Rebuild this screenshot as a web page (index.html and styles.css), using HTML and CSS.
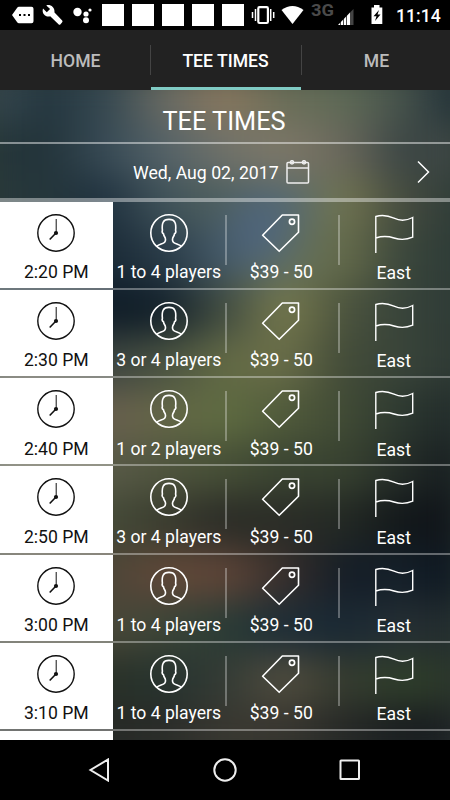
FILE: index.html
```html
<!DOCTYPE html>
<html lang="en">
<head>
    <meta charset="UTF-8">
    <meta name="viewport" content="width=device-width, initial-scale=1.0">
    <title>Tee Times</title>
    <link rel="stylesheet" href="styles.css">
</head>
<body>
    <!-- shared icons -->
    <svg class="sprite" aria-hidden="true">
        <symbol id="clock" viewBox="0 0 40 40">
            <circle cx="20" cy="20" r="18.2" stroke-width="1.4"/>
            <path d="M20.2 6v14" stroke-width="1"/>
            <path d="M19.5 20.5l-5.8 6" stroke-width="1.6"/>
            <circle cx="20" cy="20" r="2.1" fill="currentColor" stroke="none"/>
        </symbol>
        <symbol id="player" viewBox="0 0 40 40">
            <circle cx="20" cy="20" r="18.2"/>
            <path d="M7.6 33.3C10 31.5 13 31 14.8 29.9C16.8 28.7 16.7 26.5 16.2 24.8C15.5 23.5 14.7 22.5 14.5 20.8C13.3 20 12.9 18.5 13.4 17.2C12.7 10.5 13.8 6.4 20 6.4S27.3 10.5 26.6 17.2C27.1 18.5 26.7 20 25.5 20.8C25.3 22.5 24.5 23.5 23.8 24.8C23.3 26.5 23.2 28.7 25.2 29.9C27 31 30 31.5 32.4 33.3"/>
        </symbol>
        <symbol id="tag" viewBox="0 0 40 40">
            <path d="M21.3 2h16.2v17.3L18.2 38.3L1.6 22.2z" stroke-linejoin="round"/>
            <circle cx="31" cy="8.8" r="2.6" stroke-width="1.7"/>
        </symbol>
        <symbol id="flag" viewBox="0 0 40 40">
            <path d="M1.8 40V3.5C8 1.5 13 2 20 5.2C26 8 32 8 38.7 4.5V24.2C32 27 26 27 20 25C13 22.8 8 23 1.8 25" stroke-width="1.4"/>
        </symbol>
    </svg>

    <div class="statusbar">
        <svg width="100" height="30" viewBox="0 0 100 30" fill="#fff">
            <path d="M12 15l5-7q.8-1.2 2-1.2h12.5q2 0 2 2v12.5q0 2-2 2H19q-1.2 0-2-1.2z"/>
            <path d="M19 14h2v2h-2zM23.5 14h2v2h-2zM28 14h2v2h-2z" fill="#000"/>
            <path d="M43 8.5l3.8 3.7 3.3-3.3-3.8-3.5c3.8-1.2 8.7 1.5 8.2 7.2l7.7 8q.8 1-.2 2l-1.5 1.7q-1 1-2 0l-8.3-8c-4 1.2-8.9-2.2-7.2-7.8z"/>
            <circle cx="77.5" cy="12" r="4.2"/>
            <circle cx="86" cy="14" r="2.6"/>
            <circle cx="90" cy="10" r="1.6"/>
            <circle cx="86" cy="20.3" r="3"/>
        </svg>
        <div class="notices"><i></i><i></i><i></i><i></i><i></i></div>
        <svg class="signals" width="142" height="30" viewBox="250 0 142 30" fill="#fff">
            <rect x="258.3" y="7.2" width="9.6" height="15.8" rx="1.2" fill="none" stroke="#fff" stroke-width="2.2"/>
            <path d="M255.5 9v12M252.5 12v6M270.7 9v12M273.7 12v6" stroke="#fff" stroke-width="1.5"/>
            <path d="M281.5 10q11-8 22 0L292.5 24z"/>
            <text x="311" y="15.5" class="network" textLength="23" lengthAdjust="spacingAndGlyphs">3G</text>
            <path d="M338 25L350 12.5V25z"/>
            <path d="M350 12.5L353.5 9V25H350z" fill="#444"/>
            <path d="M340.5 20v5M343.5 17v8M346.5 14v11" stroke="#000" stroke-width=".7"/>
            <path d="M371.5 7.5h2.5V5h5.5v2.5h2.8V24h-10.8z"/>
            <path d="M379 10l-5.5 6.3h3L375 21l5.5-6.4h-3z" fill="#000"/>
        </svg>
        <span class="time">11:14</span>
    </div>

    <nav class="tabs">
        <a class="tab">HOME</a>
        <a class="tab active">TEE TIMES</a>
        <a class="tab">ME</a>
    </nav>

    <main class="content">
        <h1>TEE TIMES</h1>
        <div class="date">
            <span>Wed, Aug 02, 2017</span>
            <svg class="calendar" width="24" height="24" viewBox="0 0 24 24">
                <rect x="1" y="2.5" width="21.5" height="20.5" rx="1"/>
                <path d="M1 8h21.5"/>
                <circle cx="6" cy="2.3" r="1.6"/>
                <circle cx="18" cy="2.3" r="1.6"/>
            </svg>
            <svg class="next" width="14" height="24" viewBox="0 0 14 24">
                <path d="M2 1.5L12.5 12L2 22.5"/>
            </svg>
        </div>

        <div class="list">
            <div class="row">
                <div class="cell start"><svg><use href="#clock"/></svg><span>2:20 PM</span></div>
                <div class="cell"><svg><use href="#player"/></svg><span>1 to 4 players</span></div>
                <div class="cell"><svg><use href="#tag"/></svg><span>$39 - 50</span></div>
                <div class="cell course"><svg><use href="#flag"/></svg><span>East</span></div>
            </div>
            <div class="row">
                <div class="cell start"><svg><use href="#clock"/></svg><span>2:30 PM</span></div>
                <div class="cell"><svg><use href="#player"/></svg><span>3 or 4 players</span></div>
                <div class="cell"><svg><use href="#tag"/></svg><span>$39 - 50</span></div>
                <div class="cell course"><svg><use href="#flag"/></svg><span>East</span></div>
            </div>
            <div class="row">
                <div class="cell start"><svg><use href="#clock"/></svg><span>2:40 PM</span></div>
                <div class="cell"><svg><use href="#player"/></svg><span>1 or 2 players</span></div>
                <div class="cell"><svg><use href="#tag"/></svg><span>$39 - 50</span></div>
                <div class="cell course"><svg><use href="#flag"/></svg><span>East</span></div>
            </div>
            <div class="row">
                <div class="cell start"><svg><use href="#clock"/></svg><span>2:50 PM</span></div>
                <div class="cell"><svg><use href="#player"/></svg><span>3 or 4 players</span></div>
                <div class="cell"><svg><use href="#tag"/></svg><span>$39 - 50</span></div>
                <div class="cell course"><svg><use href="#flag"/></svg><span>East</span></div>
            </div>
            <div class="row">
                <div class="cell start"><svg><use href="#clock"/></svg><span>3:00 PM</span></div>
                <div class="cell"><svg><use href="#player"/></svg><span>1 to 4 players</span></div>
                <div class="cell"><svg><use href="#tag"/></svg><span>$39 - 50</span></div>
                <div class="cell course"><svg><use href="#flag"/></svg><span>East</span></div>
            </div>
            <div class="row">
                <div class="cell start"><svg><use href="#clock"/></svg><span>3:10 PM</span></div>
                <div class="cell"><svg><use href="#player"/></svg><span>1 to 4 players</span></div>
                <div class="cell"><svg><use href="#tag"/></svg><span>$39 - 50</span></div>
                <div class="cell course"><svg><use href="#flag"/></svg><span>East</span></div>
            </div>
            <div class="row">
                <div class="cell start"></div>
            </div>
        </div>
    </main>

    <div class="navbar">
        <svg width="24" height="24" viewBox="0 0 24 24"><path d="M20 1.5V22.5L2.5 12z"/></svg>
        <svg width="24" height="24" viewBox="0 0 24 24"><circle cx="12" cy="12" r="10.7"/></svg>
        <svg width="24" height="24" viewBox="0 0 24 24"><rect x="2.5" y="2.5" width="18.5" height="18.5" rx=".5"/></svg>
    </div>
</body>
</html>
```
FILE: styles.css
```css
* {
    box-sizing: border-box;
}
body {
    margin: 0;
    width: 450px;
    height: 800px;
    overflow: hidden;
    display: flex;
    flex-direction: column;
    background: #000;
    color: #fff;
    font-family: Roboto, sans-serif;
    font-size: 17.6px;
}
svg {
    display: block;
    flex-shrink: 0;
}
.sprite {
    position: absolute;
    width: 0;
    height: 0;
}

/* status bar */
.statusbar {
    height: 30px;
    flex-shrink: 0;
    display: flex;
    align-items: center;
    background: #000;
}
.notices {
    display: flex;
    gap: 8px;
    padding-left: 1.5px;
}
.notices i {
    width: 22px;
    height: 22px;
    background: #fff;
}
.signals {
    margin-left: 6.5px;
}
.network {
    font-size: 16px;
    font-weight: 700;
    fill: #4a4a4a;
}
.time {
    padding-top: 1px;
    margin-left: 4px;
    font-weight: 500;
}

/* tabs */
.tabs {
    height: 60px;
    flex-shrink: 0;
    display: grid;
    grid-template-columns: 150px 150px 150px;
    background: #222;
}
.tab {
    position: relative;
    display: flex;
    align-items: center;
    justify-content: center;
    padding: 2px 0 0 1px;
    font-weight: 500;
    color: #bcbcbc;
}
.tab:last-child {
    padding-left: 3px;
}
.tab + .tab::before {
    content: "";
    position: absolute;
    left: 0;
    top: 15px;
    width: 1px;
    height: 30px;
    background: #444;
}
.tab:last-child::before {
    left: 1px;
}
.tab.active {
    color: #fff;
}
.tab.active::after {
    content: "";
    position: absolute;
    left: 1px;
    right: -1px;
    bottom: 0;
    height: 3px;
    background: #80cbc4;
}

.content {
    position: relative;
    z-index: 0;
    flex: 1;
    min-height: 0;
    overflow: hidden;
    background: #2f3a38;
}
/* blurred course photo, in 50px bands of colour */
.content::before {
    content: "";
    position: absolute;
    z-index: -1;
    inset: 0;
    transform: scale(1.06);
    filter: blur(16px);
    background:
        radial-gradient(circle 46px at 258px 152px, #4c6484, #4c648400) 0 0 / 100% 100%,
        linear-gradient(90deg, #3a4c53, #24363f, #354851, #6a6c64, #8a785e, #6a6e58, #5f6b57, #46524b, #1a2b36) 0 0 / 100% 50px,
        linear-gradient(90deg, #26373a, #22333a, #384b56, #556369, #70726a, #7e7868, #6a685c, #3a4544, #414946) 0 50px / 100% 50px,
        linear-gradient(90deg, #2a3a3a, #25363b, #203240, #40535a, #4f605e, #566a70, #727550, #454b3f, #2d3b38) 0 100px / 100% 50px,
        linear-gradient(90deg, #1f2f38, #1f2f38, #1a2a36, #293b48, #455a68, #62705f, #666c4a, #3a463c, #2c3a36) 0 150px / 100% 50px,
        linear-gradient(90deg, #1f2f38, #1f2f38, #0f1c27, #14222c, #434e42, #777a4e, #4c543e, #37433a, #2e3a36) 0 200px / 100% 50px,
        linear-gradient(90deg, #474b41, #474b41, #3c4440, #4a5342, #636a45, #6a6e49, #424b38, #39443a, #2d3833) 0 250px / 100% 50px,
        linear-gradient(90deg, #675e4d, #675e4d, #695f4e, #636647, #5f6c41, #505a3b, #414b35, #2c3830, #1e2728) 0 300px / 100% 50px,
        linear-gradient(90deg, #595a48, #595a48, #595a48, #4f553e, #464f36, #3a4432, #384230, #242c28, #13191d) 0 350px / 100% 50px,
        linear-gradient(90deg, #454b38, #454b38, #454b38, #3a3c2f, #2b2c27, #2b2d27, #232924, #12171a, #0f1319) 0 400px / 100% 50px,
        linear-gradient(90deg, #4d4538, #4d4538, #4d4538, #604838, #5e4538, #372f2c, #141d27, #15202a, #0b141e) 0 450px / 100% 50px,
        linear-gradient(90deg, #4a4839, #4a4839, #4a4839, #3c4537, #2a3c36, #1e2d37, #1a2934, #262f34, #202a2b) 0 500px / 100% 50px,
        linear-gradient(90deg, #2a3228, #2a3228, #2a3228, #26332f, #343b35, #514d3f, #343a2f, #2f3f2b, #2a3429) 0 550px / 100% 50px,
        linear-gradient(90deg, #262825, #262825, #262825, #2a2b28, #3a3831, #37352f, #262826, #181c1f, #1c1f22) 0 600px / 100% 50px;
    background-repeat: no-repeat;
}
h1 {
    height: 54px;
    margin: 0;
    padding: 5px 2px 0 0;
    border-bottom: 2px solid rgba(255, 255, 255, .45);
    font-size: 25.3px;
    font-weight: 400;
    line-height: 54px;
    text-align: center;
}
.date {
    height: 58px;
    display: flex;
    align-items: center;
    padding: 2px 20px 0 133px;
    border-bottom: 4px solid rgba(255, 255, 255, .4);
}
.date span {
    padding-top: 2px;
    font-size: 17.7px;
}
.calendar {
    margin-left: 7.5px;
    fill: none;
    stroke: #eee;
    stroke-width: 1.5;
}
.next {
    margin-left: auto;
    fill: none;
    stroke: #fff;
    stroke-width: 1.5;
}

/* tee time rows */
.row {
    height: 88.15px;
    display: grid;
    grid-template-columns: repeat(4, 1fr);
    border-bottom: 2px solid rgba(255, 255, 255, .35);
}
.cell {
    position: relative;
    display: flex;
    flex-direction: column;
    align-items: center;
    padding-top: 11px;
    white-space: nowrap;
}
.cell svg {
    width: 40px;
    height: 40px;
    fill: none;
    stroke: currentColor;
    stroke-width: 1.6;
}
.cell span {
    margin-top: 9.3px;
    line-height: 21px;
}
.cell + .cell + .cell::before {
    content: "";
    position: absolute;
    left: 0;
    top: 13px;
    width: 2px;
    height: 50px;
    background: rgba(255, 255, 255, .3);
}
.start {
    background: #fff;
    color: #111;
}
.cell.course span {
    margin-top: 10.3px;
}

/* system navigation */
.navbar {
    height: 60px;
    flex-shrink: 0;
    display: flex;
    align-items: center;
    justify-content: center;
    gap: 101px;
    background: #000;
}
.navbar svg {
    fill: none;
    stroke: #eee;
    stroke-width: 2;
}
```
